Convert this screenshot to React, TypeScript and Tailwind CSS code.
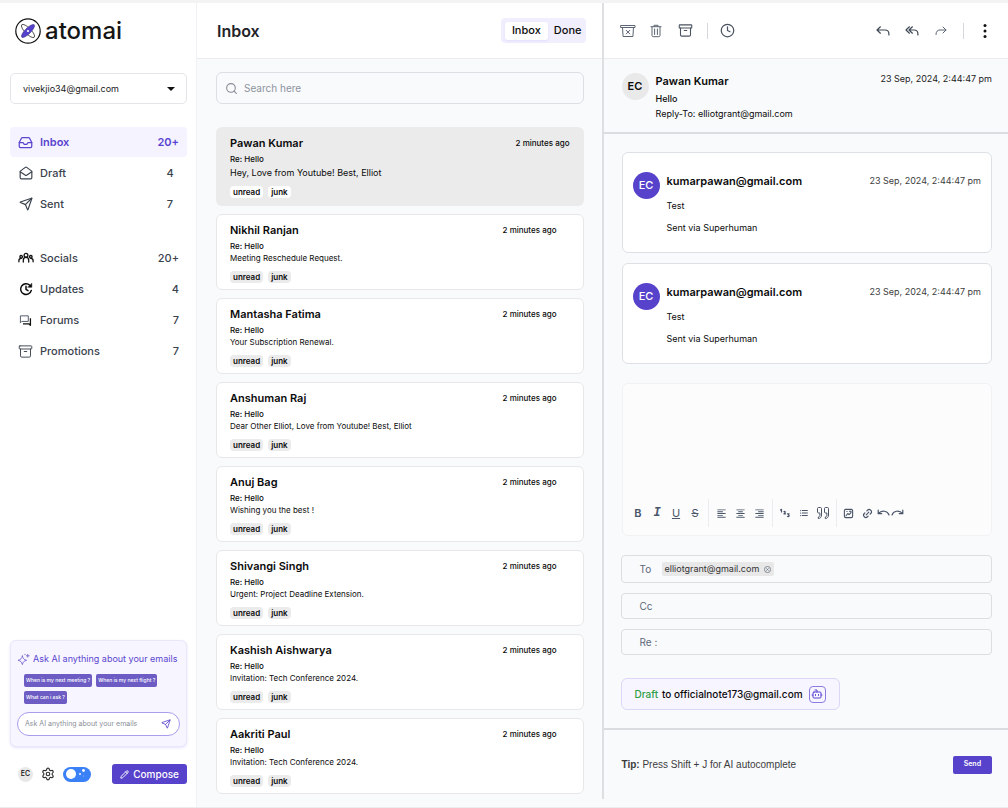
import type { ReactNode } from "react";
import { Archive, Bot, Clock, Inbox, Link2, MailOpen, Pencil, Search, Send, Settings } from "lucide-react";
import {
  MdFormatAlignCenter,
  MdFormatAlignLeft,
  MdFormatAlignRight,
  MdFormatListBulleted,
} from "react-icons/md";

type Mail = { name: string; text: string };

const mails: Mail[] = [
  { name: "Nikhil Ranjan", text: "Meeting Reschedule Request." },
  { name: "Mantasha Fatima", text: "Your Subscription Renewal." },
  { name: "Anshuman Raj", text: "Dear Other Elliot, Love from Youtube! Best, Elliot" },
  { name: "Anuj Bag", text: "Wishing you the best !" },
  { name: "Shivangi Singh", text: "Urgent: Project Deadline Extension." },
  { name: "Kashish Aishwarya", text: "Invitation: Tech Conference 2024." },
  { name: "Aakriti Paul", text: "Invitation: Tech Conference 2024." },
];

function Logo() {
  return (
    <svg viewBox="0 0 26 26" className="size-[26px]" fill="none" aria-hidden="true">
      <circle cx="13" cy="13" r="12.2" stroke="#111" strokeWidth="1.2" />
      <ellipse cx="13" cy="13" rx="8.800" ry="3" transform="rotate(45 13 13)" stroke="#333" strokeWidth="0.8" />
      <ellipse cx="13" cy="13" rx="8.800" ry="2.900" transform="rotate(-45 13 13)" fill="#5542cc" stroke="#2c2370" strokeWidth="0.5" />
      <circle cx="13" cy="13" r="1.1" fill="#fff" />
    </svg>
  );
}

function PeopleIcon() {
  return (
    <svg viewBox="0 0 16 12" className="h-3 w-4 shrink-0" fill="none" stroke="#111" strokeWidth="1.3" strokeLinecap="round" aria-hidden="true">
      <circle cx="8" cy="3.2" r="1.9" />
      <circle cx="3.2" cy="4.8" r="1.3" />
      <circle cx="12.8" cy="4.8" r="1.3" />
      <path d="M5.300 10V8.2C5.300 6.5 6.4 5.4 8 5.4s2.700 1.1 2.700 2.8V10M.9 9.800V8.600c0-1.200.9-2.200 2.300-2.200M15.100 9.800V8.600c0-1.200-.9-2.200-2.300-2.200" />
    </svg>
  );
}

function UpdateIcon() {
  return (
    <svg viewBox="0 0 14 14" className="size-[14px]" fill="none" stroke="#0b0b0b" strokeWidth="1.500" strokeLinecap="round" strokeLinejoin="round" aria-hidden="true">
      <path d="M12.300 8.400A5.400 5.400 0 1 1 10.800 3.200M7 4.300V7.400l2 1.300" />
      <path d="M12.800 1.500V5.300H9Z" fill="#0b0b0b" strokeWidth="0.500" />
    </svg>
  );
}

function ForumIcon() {
  return (
    <svg viewBox="0 0 14 14" className="size-[13px]" fill="none" aria-hidden="true">
      <path d="M1.500 2h8.500v6H3L1.500 9.500Z" stroke="#4a525e" strokeWidth="1" strokeLinejoin="round" />
      <path d="M12.300 4.500V12.200l-1.500-1.500H4.300" stroke="#111" strokeWidth="1.400" strokeLinejoin="round" />
    </svg>
  );
}

function SparkleIcon() {
  return (
    <svg viewBox="0 0 14 14" className="size-[13px]" fill="none" stroke="#7a6ad6" strokeWidth="1" strokeLinejoin="round" strokeLinecap="round" aria-hidden="true">
      <path d="M5.8 3.2c.6 2.9 1.7 4 4.6 4.7-2.9.6-4 1.7-4.6 4.6-.7-2.9-1.8-4-4.7-4.6 2.9-.7 4-1.8 4.7-4.7ZM11.600 1.500v3M10.100 3h3M8.600 1.400v.4" />
    </svg>
  );
}

function SpamIcon() {
  return (
    <svg viewBox="0 0 16 14" className="h-[14px] w-4" fill="none" stroke="#5b6472" strokeWidth="1" strokeLinejoin="round" strokeLinecap="round" aria-hidden="true">
      <path d="M1 1.500h14v2H1ZM2.500 3.500l.6 9h9.800l.6-9M6.200 6.300l3.600 3.600M9.800 6.300 6.200 9.900" />
    </svg>
  );
}

function TrashIcon() {
  return (
    <svg viewBox="0 0 12 14" className="h-[14px] w-3" fill="none" stroke="#5b6472" strokeWidth="1" strokeLinejoin="round" strokeLinecap="round" aria-hidden="true">
      <path d="M1 2.700h10M4 2.500V1.300h4v1.200M2 2.900v8.600c0 .8.500 1.200 1.200 1.200h5.600c.7 0 1.200-.4 1.200-1.200V2.900M4.600 5v5.500M7.400 5v5.500" />
    </svg>
  );
}

function ReplyIcon({ all = false }: { all?: boolean }) {
  return (
    <svg viewBox="0 0 14 12" className="h-3 w-[14px]" fill="none" stroke="#3e4754" strokeWidth="1.2" strokeLinejoin="round" strokeLinecap="round" aria-hidden="true">
      {all ? (
        <path d="M4.400 1.800 1 5l3.400 3.200M7.400 1.800 4 5l3.400 3.200M4.200 5H9c2.400 0 3.900 1.500 3.900 3.900V10" />
      ) : (
        <path d="M4.400 1.800 1 5l3.400 3.200M1.200 5H9c2.400 0 3.900 1.500 3.900 3.900V10" />
      )}
    </svg>
  );
}

function ForwardIcon() {
  return (
    <svg viewBox="0 0 14 12" className="h-3 w-[14px]" fill="none" stroke="#5b6472" strokeWidth="1" strokeLinejoin="round" strokeLinecap="round" aria-hidden="true">
      <path d="M9 2l3 3-3 3M12 5H6C3.500 5 2 6.500 2 9.500" />
    </svg>
  );
}

function NumberedIcon() {
  return (
    <svg viewBox="0 0 12 12" className="size-3" fill="none" stroke="#4a5568" strokeWidth="1.200" strokeLinecap="round" strokeLinejoin="round" aria-hidden="true">
      <path d="M1.500 3 2.500 2.300V5M5 4.600c1.500-.6 1.900.6 0 2.200h1.600M8.500 6.800h1.600L9.300 8c1.300.2 1 2-.8 1.500" />
    </svg>
  );
}

function QuoteIcon() {
  return (
    <svg viewBox="0 0 14 14" className="size-[14px]" fill="none" stroke="#4a5568" strokeWidth="1" strokeLinejoin="round" aria-hidden="true">
      <path d="M1.500 2.500c0-.6.4-1 1-1h2c.6 0 1 .4 1 1v6.500c0 2-1.200 3.500-3.200 3.500v-1.500c1-.2 1.600-.9 1.600-2V7H2.500c-.6 0-1-.4-1-1ZM8.500 2.500c0-.6.4-1 1-1h2c.6 0 1 .4 1 1v6.500c0 2-1.200 3.500-3.200 3.500v-1.500c1-.2 1.600-.9 1.600-2V7h-1.400c-.6 0-1-.4-1-1Z" />
    </svg>
  );
}

function PictureIcon() {
  return (
    <svg viewBox="0 0 12 12" className="size-[11px]" fill="none" stroke="#4a5568" strokeWidth="1.200" strokeLinejoin="round" strokeLinecap="round" aria-hidden="true">
      <rect x="1.500" y="1.500" width="9" height="9" rx="1.500" />
      <path d="M3.300 8.500 5.200 6l1.500 1.300L8.700 5M4.200 3.800h.3M7 3.500h1.700V5" />
    </svg>
  );
}

function UndoIcon({ redo = false }: { redo?: boolean }) {
  return (
    <svg viewBox="0 0 13 10" className="h-[10px] w-[13px]" fill="none" stroke="#4a5568" strokeWidth="1.200" strokeLinecap="round" strokeLinejoin="round" aria-hidden="true">
      {redo ? <path d="M1 7c1.500-4 7-5.500 10.500-1.500M11.800 2.200v3.500H8.300" /> : <path d="M12 7C10.500 3 5 1.500 1.500 5.500M1.200 2.200v3.500h3.500" />}
    </svg>
  );
}

function NavItem({ icon, label, count, active = false, flush = false }: { icon: ReactNode; label: string; count: string; active?: boolean; flush?: boolean }) {
  return (
    <a
      href="#"
      className={
        active
          ? "flex h-[30px] items-center rounded bg-[#f5f3ff] px-2 text-[11px] font-semibold text-[#5a45cf]"
          : "flex h-[30px] items-center rounded px-2 text-[11px] font-medium text-[#3a424d]"
      }
    >
      <span className="flex w-[15px] justify-center">{icon}</span>
      <span className="ml-[7px] flex-1">{label}</span>
      <span className={flush ? "text-right" : "min-w-[18px] text-center"}>{count}</span>
    </a>
  );
}

function Tag({ children, light = false }: { children: string; light?: boolean }) {
  return (
    <span className={light ? "rounded-sm bg-white px-[3px] text-[8px] leading-3 font-semibold" : "rounded-sm bg-[#ebebeb] px-[3px] text-[8px] leading-3 font-semibold"}>
      {children}
    </span>
  );
}

function MessageCard() {
  return (
    <article className="flex h-[101px] gap-[7px] rounded-md border border-[#dde1e6] bg-white pt-[19px] pr-[10px] pl-[10px]">
      <span className="flex size-[27px] shrink-0 items-center justify-center rounded-full bg-[#5742cb] text-[11px] font-medium text-white">EC</span>
      <div className="flex-1">
        <div className="flex justify-between">
          <h3 className="text-[11px] leading-[18px] font-semibold">kumarpawan@gmail.com</h3>
          <time className="text-[9px] leading-[18px] text-[#3d3d3d]">23 Sep, 2024, 2:44:47 pm</time>
        </div>
        <p className="mt-[10px] text-[9px] leading-3">Test</p>
        <p className="mt-[10px] text-[9px] leading-3">Sent via Superhuman</p>
      </div>
    </article>
  );
}

function ToolButton({ label, children }: { label: string; children: ReactNode }) {
  return (
    <button type="button" aria-label={label} className="flex w-[19px] items-center justify-center">
      {children}
    </button>
  );
}

function Sidebar() {
  return (
    <aside className="flex w-[197px] shrink-0 flex-col border-r border-[#f0f1f4] bg-white pr-[9px] pb-[23px] pl-[10px]">
      <div className="flex h-[56px] items-center gap-1 pl-[5px]">
        <Logo />
        <span className="text-[24px] leading-6 font-medium text-[#151515]">atomai</span>
      </div>

      <div className="mt-[14px] grid h-[31px] items-center rounded-[5px] border border-[#e4e5e8]">
        <select aria-label="Account" className="col-start-1 row-start-1 h-full w-full appearance-none bg-transparent pl-3 text-[9px] text-[#222]">
          <option>vivekjio34@gmail.com</option>
        </select>
        <svg viewBox="0 0 8 4" className="pointer-events-none col-start-1 row-start-1 mr-[11px] h-1 w-2 justify-self-end" aria-hidden="true">
          <path d="M0 0h8L4 4Z" fill="#111" />
        </svg>
      </div>

      <nav aria-label="Mailboxes" className="mt-[23px] flex flex-col gap-px">
        <NavItem active icon={<Inbox className="size-[15px]" />} label="Inbox" count="20+" />
        <NavItem icon={<MailOpen className="size-[14px]" />} label="Draft" count="4" />
        <NavItem icon={<Send className="size-[14px]" />} label="Sent" count="7" />
      </nav>
      <nav aria-label="Categories" className="mt-6 flex flex-col gap-px">
        <NavItem flush icon={<PeopleIcon />} label="Socials" count="20+" />
        <NavItem flush icon={<UpdateIcon />} label="Updates" count="4" />
        <NavItem flush icon={<ForumIcon />} label="Forums" count="7" />
        <NavItem flush icon={<Archive className="size-[15px]" strokeWidth={1.5} />} label="Promotions" count="7" />
      </nav>

      <section className="mt-auto rounded-md border border-[#eae6fb] bg-[#f7f5ff] px-[6px] pt-[10px] pb-[10px] shadow-sm shadow-[#e9e5fb]">
        <h2 className="flex items-center gap-[3px] text-[9px] leading-4 whitespace-nowrap text-[#5a45cf]">
          <SparkleIcon />
          Ask AI anything about your emails
        </h2>
        <div className="mt-[7px] flex flex-wrap gap-1 pl-[7px] text-[5px] leading-[13px] font-medium text-white">
          <button type="button" className="rounded-[2px] bg-[#6c5cc4] px-[2px]">When is my next meeting ?</button>
          <button type="button" className="rounded-[2px] bg-[#6c5cc4] px-[2px]">When is my next flight ?</button>
          <button type="button" className="rounded-[2px] bg-[#6c5cc4] px-[2px]">What can i ask ?</button>
        </div>
        <div className="mt-2 flex h-6 items-center rounded-full border border-[#a99dec] bg-white pr-2 pl-[7px]">
          <input aria-label="Ask AI" placeholder="Ask AI anything about your emails" className="min-w-0 flex-1 text-[7px] outline-none placeholder:text-[#8b8f98]" />
          <button type="button" aria-label="Ask">
            <Send className="size-[10px] text-[#5a45cf]" />
          </button>
        </div>
      </section>

      <div className="mt-[17px] flex h-5 items-center pl-2">
        <span className="flex size-[15px] items-center justify-center rounded-full bg-[#e8e8e8] text-[7px] font-medium">EC</span>
        <button type="button" aria-label="Settings" className="ml-2">
          <Settings className="size-[14px] text-[#333]" />
        </button>
        <label className="ml-2 flex h-[15px] w-7 cursor-pointer items-center rounded-full bg-[#3a80f6] px-[2px]">
          <input type="checkbox" role="switch" aria-label="Theme" className="sr-only" />
          <svg viewBox="0 0 24 12" className="h-3 w-6" fill="#fff" aria-hidden="true">
            <circle cx="6" cy="6" r="5" />
            <circle cx="18.500" cy="2.500" r="1.400" />
            <circle cx="15" cy="6" r="0.900" />
            <circle cx="18.500" cy="8" r="0.400" />
          </svg>
        </label>
        <button type="button" className="ml-auto flex h-5 items-center gap-1 rounded-[3px] bg-[#5742cb] px-2 text-[10px] font-medium text-white">
          <Pencil className="size-[9px]" strokeWidth={2.5} />
          Compose
        </button>
      </div>
    </aside>
  );
}

function MailList() {
  return (
    <section className="flex min-w-0 flex-1 flex-col">
      <header className="flex h-[56px] shrink-0 items-center justify-between border-b border-[#ebecef] bg-white pr-4 pl-5">
        <h1 className="text-[16px] font-semibold text-[#1f2329]">Inbox</h1>
        <div className="flex h-[25px] items-center rounded bg-[#f1eefe] px-1 text-[11px] font-medium">
          <button type="button" className="h-[18px] rounded-[3px] bg-white px-[7px] shadow-sm shadow-[#e4dffb]">Inbox</button>
          <button type="button" className="h-[18px] pl-[6px]">Done</button>
        </div>
      </header>
      <div className="flex flex-col pr-[18px] pl-[19px]">
        <label className="mt-[13px] flex h-8 items-center gap-[6px] rounded-md border border-[#dcdfe3] px-2">
          <Search className="size-[13px] text-[#858b95]" />
          <input type="search" aria-label="Search mail" placeholder="Search here" className="flex-1 bg-transparent text-[10px] outline-none placeholder:text-[#8d939c]" />
        </label>
        <ul className="mt-[23px] flex flex-col gap-2">
          <li className="flex h-[79px] flex-col rounded-md bg-[#ebebeb] pt-2 pr-[14px] pl-[14px]">
            <div className="flex items-center justify-between">
              <h2 className="text-[11px] leading-4 font-semibold">Pawan Kumar</h2>
              <time className="text-[8px] font-medium">2 minutes ago</time>
            </div>
            <p className="mt-[2px] text-[8px] leading-3 font-medium">Re: Hello</p>
            <p className="text-[9px] leading-4">Hey, Love from Youtube! Best, Elliot</p>
            <div className="mt-[5px] flex gap-[5px]">
              <Tag light>unread</Tag>
              <Tag light>junk</Tag>
            </div>
          </li>
          {mails.map((mail) => (
            <li key={mail.name} className="flex h-[76px] flex-col rounded-md border border-[#e8e8ea] bg-white pt-[7px] pr-[26px] pl-[13px]">
              <div className="flex items-center justify-between">
                <h2 className="text-[11px] leading-4 font-semibold">{mail.name}</h2>
                <time className="text-[8px] font-medium">2 minutes ago</time>
              </div>
              <p className="mt-[2px] text-[8px] leading-3 font-medium">Re: Hello</p>
              <p className="text-[8px] leading-3">{mail.text}</p>
              <div className="mt-[7px] flex gap-[5px]">
                <Tag>unread</Tag>
                <Tag>junk</Tag>
              </div>
            </li>
          ))}
        </ul>
      </div>
    </section>
  );
}

function Detail() {
  return (
    <main className="mb-2 flex min-w-0 flex-1 flex-col border-l-2 border-[#dddfe2]">
      <header className="flex h-[56px] shrink-0 items-center border-b border-[#ebecef] bg-white pr-[21px] pl-4 text-[#4a535f]">
        <button type="button" aria-label="Spam"><SpamIcon /></button>
        <button type="button" aria-label="Delete" className="ml-[14px]"><TrashIcon /></button>
        <button type="button" aria-label="Archive" className="ml-4"><Archive className="size-[15px]" strokeWidth={1.75} /></button>
        <span className="ml-[14px] h-4 w-px bg-[#d5d8dc]" />
        <button type="button" aria-label="Snooze" className="ml-3"><Clock className="size-[15px]" /></button>
        <button type="button" aria-label="Reply" className="ml-auto"><ReplyIcon /></button>
        <button type="button" aria-label="Reply all" className="ml-[15px]"><ReplyIcon all /></button>
        <button type="button" aria-label="Forward" className="ml-[15px]"><ForwardIcon /></button>
        <span className="ml-[15px] h-4 w-px bg-[#d5d8dc]" />
        <button type="button" aria-label="More" className="ml-[19px]">
          <svg viewBox="0 0 4 16" className="h-4 w-1" fill="#111" aria-hidden="true">
            <circle cx="2" cy="2.500" r="1.500" />
            <circle cx="2" cy="8" r="1.500" />
            <circle cx="2" cy="13.500" r="1.500" />
          </svg>
        </button>
      </header>

      <section className="flex h-[75px] shrink-0 gap-[7px] border-b-2 border-[#dadcdf] pt-[14px] pr-4 pl-[18px]">
        <span className="flex size-[27px] shrink-0 items-center justify-center rounded-full bg-[#e9e9e9] text-[11px] font-semibold">EC</span>
        <div className="flex-1">
          <h2 className="text-[11px] leading-[17px] font-semibold">Pawan Kumar</h2>
          <p className="mt-px text-[9px] leading-[15px] font-medium">Hello</p>
          <p className="text-[9px] leading-[15px]">Reply-To: elliotgrant@gmail.com</p>
        </div>
        <time className="text-[9px] leading-3 text-[#222]">23 Sep, 2024, 2:44:47 pm</time>
      </section>

      <div className="flex flex-1 flex-col pt-[18px] pr-4 pl-[18px]">
        <div className="flex flex-col gap-[10px]">
          <MessageCard />
          <MessageCard />
        </div>

        <form className="mt-[19px] flex flex-col">
          <div className="flex h-[153px] flex-col rounded-md border border-[#f0f2f4] bg-[#fcfcfd]">
            <textarea aria-label="Message" className="flex-1 resize-none p-3 text-[10px] outline-none" />
            <div className="mb-2 flex h-7 pl-[3px] text-[11px] text-[#4a5568]">
              <div className="flex border-r border-[#eaecef] px-[3px]">
                <ToolButton label="Bold"><b className="font-semibold">B</b></ToolButton>
                <ToolButton label="Italic"><i className="font-['Liberation_Mono'] text-[12px] font-bold">I</i></ToolButton>
                <ToolButton label="Underline"><u>U</u></ToolButton>
                <ToolButton label="Strikethrough"><s>S</s></ToolButton>
              </div>
              <div className="flex border-r border-[#eaecef] px-[3px]">
                <ToolButton label="Align left"><MdFormatAlignLeft className="size-[11px]" /></ToolButton>
                <ToolButton label="Align center"><MdFormatAlignCenter className="size-[11px]" /></ToolButton>
                <ToolButton label="Align right"><MdFormatAlignRight className="size-[11px]" /></ToolButton>
              </div>
              <div className="flex border-r border-[#eaecef] px-[3px]">
                <ToolButton label="Numbered list"><NumberedIcon /></ToolButton>
                <ToolButton label="Bulleted list"><MdFormatListBulleted className="size-[10px]" /></ToolButton>
                <ToolButton label="Quote"><QuoteIcon /></ToolButton>
              </div>
              <div className="flex px-[2px]">
                <ToolButton label="Image"><PictureIcon /></ToolButton>
                <ToolButton label="Link"><Link2 className="size-[11px] -rotate-45" strokeWidth={2.5} /></ToolButton>
                <button type="button" aria-label="Undo" className="flex w-[14px] items-center"><UndoIcon /></button>
                <button type="button" aria-label="Redo" className="flex w-[14px] items-center"><UndoIcon redo /></button>
              </div>
            </div>
          </div>

          <div className="mt-[19px] -ml-px flex flex-col gap-[10px] text-[10px] text-[#5d6878]">
            <div className="flex h-7 items-center rounded border border-[#dcdee1] pl-[18px]">
              <label htmlFor="to" className="w-[22px]">To</label>
              <span className="flex h-[14px] items-center gap-[5px] rounded-[2px] bg-[#e8e8e8] px-[3px] text-[9px] text-[#333]">
                elliotgrant@gmail.com
                <button type="button" aria-label="Remove elliotgrant@gmail.com">
                  <svg viewBox="0 0 8 8" className="size-[7px]" fill="none" stroke="#5d6878" strokeWidth="0.800" aria-hidden="true">
                    <circle cx="4" cy="4" r="3.500" />
                    <path d="m2.700 2.700 2.600 2.600M5.300 2.700 2.700 5.300" />
                  </svg>
                </button>
              </span>
              <input id="to" type="email" className="min-w-0 flex-1 outline-none" />
            </div>
            <div className="flex h-[26px] items-center rounded border border-[#dcdee1] pl-[18px]">
              <label htmlFor="cc" className="w-[22px]">Cc</label>
              <input id="cc" type="email" className="min-w-0 flex-1 outline-none" />
            </div>
            <div className="flex h-[26px] items-center rounded border border-[#dcdee1] pl-[18px]">
              <label htmlFor="re" className="w-[22px]">Re :</label>
              <input id="re" type="text" className="min-w-0 flex-1 outline-none" />
            </div>
          </div>
        </form>

        <div className="mt-[23px] -ml-px flex h-8 items-center self-start rounded-md border border-[#dcd6f7] bg-[#f7f5ff] px-[13px] text-[10px] font-medium">
          <span className="text-[#2f9e44]">Draft</span>
          <span className="ml-1">to officialnote173@gmail.com</span>
          <button type="button" aria-label="Write with AI" className="ml-[6px] flex size-[17px] items-center justify-center rounded-sm border border-[#8b7de0] text-[#5a45cf]">
            <Bot className="size-3" />
          </button>
        </div>
      </div>

      <footer className="flex h-[71px] shrink-0 items-center justify-between border-t-2 border-[#dadcdf] pr-4 pl-[18px]">
        <p className="font-['Liberation_Sans','Inter',sans-serif] text-[10px] text-[#3c3c3c]"><b>Tip:</b> Press Shift + J for AI autocomplete</p>
        <button type="button" className="h-[18px] rounded-[2px] bg-[#5742cb] px-[11px] text-[7px] font-semibold text-white">Send</button>
      </footer>
    </main>
  );
}

export default function App() {
  return (
    <div className="flex min-h-screen border-t-[3px] border-b border-t-[#f3f3f3] border-b-[#ececee] bg-[#f9fafc] font-['Inter','Liberation_Sans',sans-serif] text-[#0b0b0b]">
      <Sidebar />
      <MailList />
      <Detail />
    </div>
  );
}
